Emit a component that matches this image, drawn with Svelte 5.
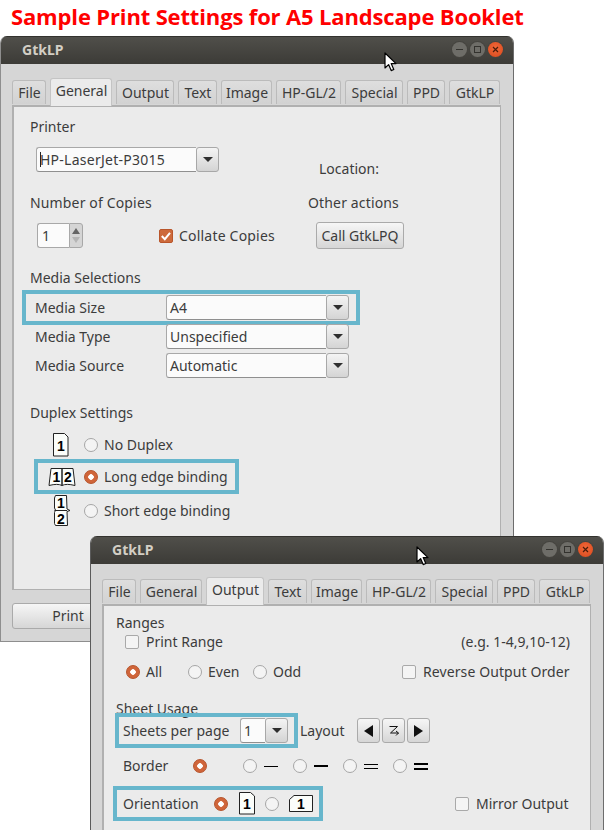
<script>
  const tabs = [
    ['File', 34], ['General', 62], ['Output', 58], ['Text', 39], ['Image', 51],
    ['HP-GL/2', 65], ['Special', 58], ['PPD', 38], ['GtkLP', 51]
  ];
</script>

{#snippet titlebar()}
  <div class="titlebar">
    <span class="wtitle">GtkLP</span>
    <div class="wbtns">
      <span class="wbtn"><svg width="15" height="15" viewBox="0 0 15 15"><path d="M4 7.5h7" stroke="#33322e" stroke-width="1"/></svg></span>
      <span class="wbtn"><svg width="15" height="15" viewBox="0 0 15 15"><rect x="4.5" y="4.5" width="6" height="6" fill="none" stroke="#33322e"/></svg></span>
      <span class="wbtn close"><svg width="15" height="15" viewBox="0 0 15 15"><path d="M5 5l5 5M10 5l-5 5" stroke="#4a1c0a" stroke-width="1.2"/></svg></span>
    </div>
  </div>
{/snippet}

{#snippet tabbar(active)}
  <div class="tabs">
    {#each tabs as [label, w]}
      <span class="tab" class:active={label === active} style="width:{w}px">{label}</span>
    {/each}
  </div>
{/snippet}

{#snippet combo(text, w, caret = false)}
  <span class="combo" style="width:{w}px">
    <span class="entry" class:caret>{text}</span>
    <span class="drop"><i class="tri down"></i></span>
  </span>
{/snippet}

{#snippet cursor()}
  <svg class="cursor" width="14" height="20" viewBox="0 0 14 20">
    <path d="M1 1v15l3.6-3.4 2.6 6 2.6-1.1-2.6-5.9H12z" fill="#fff" stroke="#000" stroke-width="1.2" stroke-linejoin="round"/>
  </svg>
{/snippet}

<h1 class="heading">Sample Print Settings for A5 Landscape Booklet</h1>

<section class="window win1">
  {@render titlebar()}
  <div class="body b1">
    {@render tabbar('General')}
    <div class="panel p1">
      <div class="lbl printer">Printer</div>
      <div class="row printer-row">
        {@render combo('HP-LaserJet-P3015', 183, true)}
        <span class="location">Location:</span>
      </div>
      <div class="row two-labels">
        <span class="col-a">Number of Copies</span>
        <span class="other">Other actions</span>
      </div>
      <div class="row copies">
        <span class="spin">
          <span class="spin-val">1</span>
          <span class="spin-btns"><i class="tri up small"></i><i class="tri down small faint"></i></span>
        </span>
        <span class="check on"><svg width="14" height="14" viewBox="0 0 14 14"><path d="M2.8 7l3 3.2 5.2-6.4" fill="none" stroke="#fff" stroke-width="2"/></svg></span>
        <span class="collate">Collate Copies</span>
        <span class="button call">Call GtkLPQ</span>
      </div>
      <div class="lbl media-head">Media Selections</div>
      <div class="hl media-hl">
        <span class="mlabel">Media Size</span>
        {@render combo('A4', 183)}
      </div>
      <div class="row mrow type">
        <span class="mlabel">Media Type</span>
        {@render combo('Unspecified', 183)}
      </div>
      <div class="row mrow source">
        <span class="mlabel">Media Source</span>
        {@render combo('Automatic', 183)}
      </div>
      <div class="lbl duplex-head">Duplex Settings</div>
      <div class="row drow d1">
        <svg class="dicon" width="16" height="24" viewBox="0 0 16 24">
          <path d="M.5 .5h11l3.500 3.500v19h-14.500z" fill="#fbfdfa" stroke="#222"/>
          <text x="8" y="17.500" class="pnum">1</text>
        </svg>
        <span class="radio"></span><span class="rlabel">No Duplex</span>
      </div>
      <div class="hl duplex-hl">
        <svg class="dicon" width="28" height="20" viewBox="0 0 28 20">
          <path d="M14 18.500c-3-1.500-7-1.500-13 0l2-17h11zM14 18.500c3-1.500 7-1.500 13 0l-2-17h-11z" fill="#fbfdfa" stroke="#222"/>
          <text x="8.500" y="15" class="pnum">1</text>
          <text x="20" y="15" class="pnum">2</text>
        </svg>
        <span class="radio on"></span><span class="rlabel">Long edge binding</span>
      </div>
      <div class="row drow d3">
        <svg class="dicon" width="19" height="32" viewBox="0 0 19 32">
          <path d="M2.500 .5h11l.5 13.500 3 1.500-3 1 .5 14h-12l-1-2v-11l1-2.500-1-2v-10z" fill="#fbfdfa" stroke="#222"/>
          <path d="M1.500 15.500h12.500" stroke="#222"/>
          <text x="8" y="12.500" class="pnum">1</text>
          <text x="8" y="28.500" class="pnum">2</text>
        </svg>
        <span class="radio"></span><span class="rlabel">Short edge binding</span>
      </div>
    </div>
    <div class="button print">Print</div>
  </div>
  {@render cursor()}
</section>

<section class="window win2">
  {@render titlebar()}
  <div class="body">
    {@render tabbar('Output')}
    <div class="panel p2">
      <div class="lbl ranges">Ranges</div>
      <div class="row range-row">
        <span class="check"></span>
        <span class="after-check">Print Range</span>
        <span class="push">(e.g. 1-4,9,10-12)</span>
      </div>
      <div class="row all-row">
        <span class="radio on"></span><span class="rt all">All</span>
        <span class="radio"></span><span class="rt even">Even</span>
        <span class="radio"></span><span class="rt odd">Odd</span>
        <span class="check"></span>
        <span class="after-check rev">Reverse Output Order</span>
      </div>
      <div class="lbl usage">Sheet Usage</div>
      <div class="usage-row">
        <div class="hl sheets-hl">
          <span class="sheets-label">Sheets per page</span>
          {@render combo('1', 48)}
        </div>
        <span class="layout">Layout</span>
        <span class="button nav"><i class="tri left"></i></span>
        <span class="button nav"><svg width="14" height="14" viewBox="0 0 14 14"><path d="M2.500 2.500h8l-7 6.500h8M9 7l2.500 2-2.500 2.500" fill="none" stroke="#111" stroke-width="1"/></svg></span>
        <span class="button nav"><i class="tri right"></i></span>
      </div>
      <div class="row border-row">
        <span class="border-label">Border</span>
        <span class="radio on"></span>
        <span class="radio b-first"></span><i class="bline thin"></i>
        <span class="radio b-next"></span><i class="bline thick"></i>
        <span class="radio b-next"></span><i class="bline dbl"></i>
        <span class="radio b-next"></span><i class="bline dbl heavy"></i>
      </div>
      <div class="orient-row">
        <div class="hl orient-hl">
          <span class="orient-label">Orientation</span>
          <span class="radio on"></span>
          <svg class="o-page" width="17" height="23" viewBox="0 0 17 23">
            <path d="M.5 .5h11l4 3.500v18h-15z" fill="#fbfdfa" stroke="#222"/>
            <text x="8" y="17" class="pnum">1</text>
          </svg>
          <span class="radio o-r2"></span>
          <svg class="o-land" width="24" height="18" viewBox="0 0 24 18">
            <path d="M5 .5h18.500v16h-23v-12z" fill="#fbfdfa" stroke="#222"/>
            <text x="12" y="14" class="pnum">1</text>
          </svg>
        </div>
        <span class="check mirror"></span>
        <span class="after-check">Mirror Output</span>
      </div>
    </div>
  </div>
  {@render cursor()}
</section>

<style>
  :global(body) { margin: 0; background: #fff; }

  .heading {
    margin: 0;
    padding: 1px 0 0 11px;
    height: 33px;
    box-sizing: border-box;
    font: 700 22px/30px "Open Sans", sans-serif;
    letter-spacing: -0.15px;
    color: #f00;
    white-space: nowrap;
  }

  .window {
    position: absolute;
    width: 514px;
    box-sizing: border-box;
    background: #d6d6d6;
    border-right: 1px solid #6d6d6d;
    border-radius: 7px 7px 0 0;
    font: 14px/18px "Noto Sans", sans-serif;
    color: #3c3c3c;
    overflow: hidden;
  }
  .win1 { left: 0; top: 36px; height: 606px; border-left: 1px solid #8e8e8e; border-bottom: 1px solid #8e8e8e; }
  .win2 { left: 90px; top: 536px; height: 294px; border-left: 1px solid #5a5a5a; }

  .titlebar {
    height: 28px;
    box-sizing: border-box;
    display: flex;
    align-items: center;
    justify-content: space-between;
    padding: 0 2px 2px 21px;
    background: linear-gradient(#504f4a, #3c3b37);
    border-top: 1px solid #33322e;
  }
  .wtitle { font-weight: 700; font-size: 14px; color: #d3cfc5; }
  .wbtns { display: flex; gap: 3px; margin-right: 8px; }
  .wbtn { width: 15px; height: 15px; border-radius: 50%; background: #6e6d68; box-shadow: 0 0 0 1px #45443f; display: block; }
  .wbtn svg { display: block; }
  .close { background: radial-gradient(circle at 50% 40%, #f2693a, #d8481c); }

  .cursor { position: absolute; }
  .win1 .cursor { left: 383px; top: 16px; }
  .win2 .cursor { left: 325px; top: 10px; }

  .body { padding: 15px 0 0 11px; }
  .win2 .body { padding-top: 14px; }

  .tabs { display: flex; gap: 4px; height: 26px; align-items: flex-end; position: relative; z-index: 1; }
  .tab {
    height: 24px;
    box-sizing: border-box;
    display: flex;
    align-items: center;
    justify-content: center;
    background: linear-gradient(#dedede, #d2d2d2);
    border: 1px solid #bbb;
    border-bottom: 0;
    border-radius: 3px 3px 0 0;
    margin-bottom: 1px;
    padding: 1px 0 0 1px;
    white-space: nowrap;
  }
  .tab.active {
    height: 28px;
    margin-bottom: -1px;
    background: #ebebeb;
    border-color: #c4c4c4;
    padding-bottom: 5px;
  }

  .panel {
    width: 489px;
    box-sizing: border-box;
    background: #ebebeb;
    border: 1px solid #b0b0b0;
    border-width: 2px 1px 1px 2px;
    padding-left: 16px;
  }
  .p1 { height: 485px; }
  .p2 { height: 240px; padding-left: 12px; border-bottom: 0; }

  .lbl { height: 18px; }
  .row { display: flex; align-items: center; }

  .printer { margin-top: 11px; }
  .printer-row { margin: 11px 0 0 6px; height: 25px; }
  .location { margin-left: 100px; height: 18px; align-self: flex-end; transform: translateY(6px); }
  .two-labels { margin-top: 22px; height: 18px; }
  .col-a { width: 278px; letter-spacing: .15px; }
  .other { letter-spacing: .15px; }
  .copies { margin: 10px 0 0 7px; height: 27px; }
  .collate { margin-left: 6px; width: 137px; letter-spacing: .2px; }
  .call { width: 88px; height: 27px; }

  .media-head { margin-top: 20px; }
  .hl {
    box-sizing: border-box;
    border: 4px solid #67b6cc;
    display: flex;
    align-items: center;
  }
  .media-hl { margin: 3px 0 0 -8px; width: 338px; height: 35px; padding-left: 9px; position: relative; }
  .mlabel { width: 131px; flex: none; padding-top: 2px; box-sizing: border-box; }
  .media-hl .mlabel { padding-top: 1px; }
  .mrow { margin-left: 5px; height: 26px; }
  .type { margin-top: -2px; position: relative; }
  .source { margin-top: 3px; }
  .duplex-head { margin-top: 26px; }

  .drow { height: 18px; }
  .d1 { margin: 14px 0 0 23px; }
  .d3 { margin: 8px 0 0 23px; }
  .dicon { flex: none; overflow: visible; }
  .d1 .dicon { margin-right: 15px; }
  .d3 .dicon { margin-right: 12px; }
  .d1 .rlabel, .d3 .rlabel { margin-left: 6px; }
  .duplex-hl { margin: 5px 0 0 4px; width: 205px; height: 35px; padding-left: 10px; }
  .duplex-hl .dicon { margin-right: 8px; }
  .duplex-hl .rlabel { margin-left: 6px; }

  .combo { display: inline-flex; height: 25px; flex: none; }
  .entry {
    flex: 1;
    min-width: 0;
    box-sizing: border-box;
    background: #fbfbfb;
    border: 1px solid #a8a8a8;
    border-right: 0;
    border-bottom-color: #8f8f8f;
    border-radius: 3px 0 0 3px;
    padding-left: 3px;
    line-height: 23px;
    white-space: nowrap;
    overflow: hidden;
    position: relative;
  }
  .caret { letter-spacing: .25px; }
  .caret::before {
    content: "";
    position: absolute;
    left: 3px;
    top: 4px;
    width: 1px;
    height: 15px;
    background: #222;
  }
  .drop {
    width: 23px;
    flex: none;
    box-sizing: border-box;
    display: flex;
    align-items: center;
    justify-content: center;
    background: linear-gradient(#f4f4f4, #d4d4d4);
    border: 1px solid #a8a8a8;
    border-radius: 3px;
  }

  .tri { display: block; width: 0; height: 0; border-style: solid; border-color: transparent; }
  .tri.down { border-width: 5px 5px 0; border-top-color: #2f2f2f; }
  .tri.up { border-width: 0 5px 5px; border-bottom-color: #2f2f2f; }
  .tri.left { border-width: 6px 9px 6px 0; border-right-color: #111; }
  .tri.right { border-width: 6px 0 6px 9px; border-left-color: #111; }
  .tri.small.up { border-width: 0 4px 6px; border-bottom-color: #666; }
  .tri.small.down { border-width: 6px 4px 0; border-top-color: #b5b5b5; }

  .spin { display: inline-flex; width: 46px; height: 25px; margin-right: 76px; flex: none; }
  .spin-val {
    flex: 1;
    box-sizing: border-box;
    background: #fbfbfb;
    border: 1px solid #a8a8a8;
    border-right: 0;
    border-radius: 3px 0 0 3px;
    padding-left: 4px;
    line-height: 23px;
  }
  .spin-btns {
    width: 14px;
    box-sizing: border-box;
    background: #d5d5d5;
    border: 1px solid #a8a8a8;
    border-radius: 0 3px 3px 0;
    display: flex;
    flex-direction: column;
    align-items: center;
    justify-content: center;
    gap: 3px;
  }

  .check {
    width: 14px;
    height: 14px;
    box-sizing: border-box;
    flex: none;
    border: 1px solid #a9a9a9;
    border-radius: 2px;
    background: #f4f4f4;
    display: block;
  }
  .check svg { display: block; margin: -1px; }
  .check.on { background: #cd6a3b; border-color: #b9552a; }

  .radio {
    width: 14px;
    height: 14px;
    box-sizing: border-box;
    flex: none;
    border: 1px solid #a6a6a6;
    border-radius: 50%;
    background: #f4f4f4;
    display: block;
  }
  .radio.on {
    background: radial-gradient(circle, #fff 0 2.500px, #d0653a 3px);
    border-color: #b6532a;
  }

  .button {
    box-sizing: border-box;
    display: flex;
    align-items: center;
    justify-content: center;
    background: linear-gradient(#f6f6f6, #d6d6d6);
    border: 1px solid #aaa;
    border-radius: 3px;
    white-space: nowrap;
  }
  .print { width: 112px; height: 26px; margin-top: 13px; }

  .pnum { font: 700 14px "Liberation Sans", sans-serif; text-anchor: middle; fill: #000; }

  .ranges { margin-top: 8px; }
  .range-row { margin: 0 0 0 9px; height: 20px; }
  .after-check { margin-left: 7px; white-space: nowrap; }
  .rev { letter-spacing: .1px; }
  .push { margin-left: auto; margin-right: 20px; }
  .all-row { margin: 10px 0 0 10px; height: 20px; }
  .rt { margin-left: 6px; }
  .all { width: 42px; }
  .even { width: 45px; }
  .odd { width: 129px; }
  .usage { margin-top: 18px; }
  .usage-row { display: flex; align-items: center; margin-top: -5px; height: 35px; position: relative; }
  .sheets-hl { margin-left: -1px; width: 183px; height: 35px; padding-left: 4px; flex: none; }
  .sheets-label { width: 117px; flex: none; }
  .layout { margin-left: 2px; width: 57px; flex: none; }
  .nav { width: 23px; height: 25px; margin-right: 2px; flex: none; }
  .border-row { margin: 9px 0 0 7px; height: 18px; }
  .border-label { width: 70px; flex: none; }
  .b-first { margin-left: 36px; }
  .b-next { margin-left: 15px; }
  .bline { display: block; width: 14px; margin-left: 7px; flex: none; background: #000; }
  .bline.thin { height: 1px; }
  .bline.thick { height: 2px; }
  .bline.dbl { height: 5px; background: none; border-top: 1px solid #000; border-bottom: 1px solid #000; box-sizing: border-box; }
  .bline.heavy { height: 7px; border-width: 2px; }
  .orient-row { display: flex; align-items: center; margin: 11px 0 0 -3px; height: 35px; }
  .orient-hl { width: 210px; height: 35px; padding-left: 6px; flex: none; }
  .orient-label { width: 91px; flex: none; }
  .o-page { margin-left: 11px; flex: none; }
  .o-r2 { margin-left: 9px; }
  .o-land { margin-left: 10px; flex: none; }
  .mirror { margin-left: 132px; }
</style>
